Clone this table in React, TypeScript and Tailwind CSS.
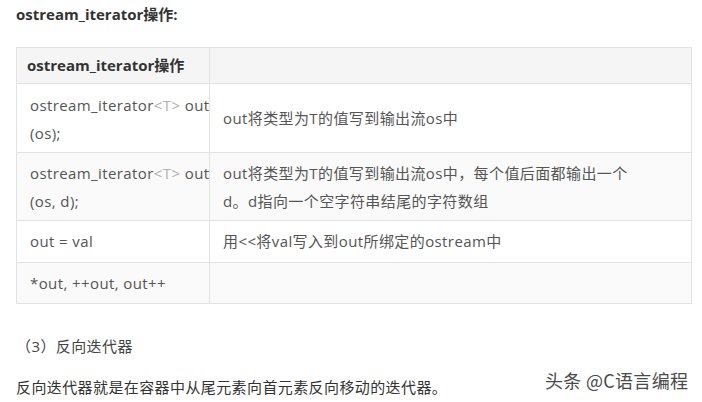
import React from 'react';

const font = { fontFamily: '"Open Sans", "Noto Sans CJK SC", sans-serif' };

function T() {
  return <span className="text-[#b0b0b0]">&lt;T&gt;</span>;
}

export default function App() {
  return (
    <div className="w-[702px] h-[402px] bg-white relative overflow-hidden text-[15px] tracking-[0.4px] text-[#555]" style={font}>
      <div className="pl-4 pt-[3px] h-[47px]">
        <p className="font-bold text-[#333] leading-[22px] tracking-normal">ostream_iterator操作:</p>
      </div>

      {/* Table */}
      <table className="ml-4 w-[676px] border-collapse table-fixed">
        <colgroup>
          <col className="w-[193px]" />
          <col />
        </colgroup>
        <tbody>
          <tr className="h-[36px] bg-[#f5f5f5]">
            <td className="border border-[#e2e2e2] pl-[10px] font-bold text-[#333] whitespace-nowrap tracking-normal">ostream_iterator操作</td>
            <td className="border border-[#e2e2e2]"></td>
          </tr>
          <tr className="h-[69px] bg-white">
            <td className="border border-[#e2e2e2] pl-[13px] pt-[2px] leading-[28px] whitespace-nowrap overflow-visible">
              ostream_iterator<T /> out<br />(os);
            </td>
            <td className="border border-[#e2e2e2] pl-[13px] whitespace-nowrap">out将类型为T的值写到输出流os中</td>
          </tr>
          <tr className="h-[68px] bg-[#fafafa]">
            <td className="border border-[#e2e2e2] pl-[13px] leading-[28px] whitespace-nowrap overflow-visible">
              ostream_iterator<T /> out<br />(os, d);
            </td>
            <td className="border border-[#e2e2e2] pl-[13px] leading-[28px] whitespace-nowrap">
              out将类型为T的值写到输出流os中，每个值后面都输出一个<br />d。d指向一个空字符串结尾的字符数组
            </td>
          </tr>
          <tr className="h-[42px] bg-white">
            <td className="border border-[#e2e2e2] pl-[13px] whitespace-nowrap">out = val</td>
            <td className="border border-[#e2e2e2] pl-[13px] whitespace-nowrap">用&lt;&lt;将val写入到out所绑定的ostream中</td>
          </tr>
          <tr className="h-[41px] bg-[#fafafa]">
            <td className="border border-[#e2e2e2] pl-[13px] whitespace-nowrap">*out, ++out, out++</td>
            <td className="border border-[#e2e2e2]"></td>
          </tr>
        </tbody>
      </table>

      <p className="pl-4 mt-[31px] leading-[22px] text-[#444]">（3）反向迭代器</p>
      <p className="pl-4 mt-[19px] leading-[22px] text-[#333]">反向迭代器就是在容器中从尾元素向首元素反向移动的迭代器。</p>

      {/* watermark */}
      <div
        className="absolute left-[545px] top-[368px] text-[18px] leading-[24px] tracking-[0.3px] text-[#4a4a4a] whitespace-nowrap"
        style={{ fontFamily: '"Noto Sans CJK SC", sans-serif', textShadow: '0 0 2px #fff, 0 0 1px #fff' }}
      >
        头条 @C语言编程
      </div>
    </div>
  );
}
